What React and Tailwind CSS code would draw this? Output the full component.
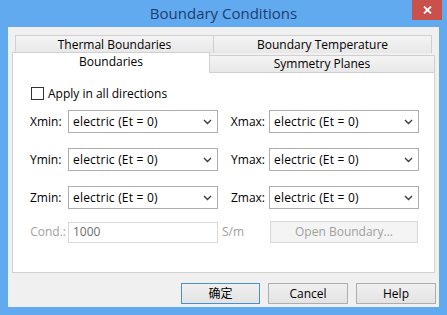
import React from 'react';

const font = { fontFamily: '"Open Sans", "Noto Sans CJK SC", sans-serif' };

const Chevron = () => (
  <svg width="9" height="6" viewBox="0 0 9 6" className="shrink-0">
    <path d="M1 1 L4.5 4.5 L8 1" fill="none" stroke="#3c3c3c" strokeWidth="1.4" />
  </svg>
);

const Combo = ({ value }) => (
  <div className="w-[150px] h-[23px] border border-[#acacac] bg-white flex items-center pl-[4px] pr-[5px] justify-between">
    <span className="text-[12px] text-black leading-none tracking-[0.2px]">{value}</span>
    <Chevron />
  </div>
);

const Row = ({ left, right }) => (
  <div className="flex items-center h-[23px]">
    <div className="w-[42px] pl-[4px] text-[12px] text-black">{left}</div>
    <Combo value="electric (Et = 0)" />
    <div className="w-[51px] pr-[4px] text-right text-[12px] text-black">{right}</div>
    <Combo value="electric (Et = 0)" />
  </div>
);

const Button = ({ children, primary }) => (
  <button
    className={`h-[21px] text-[12px] text-black border bg-gradient-to-b from-[#f0f0f0] to-[#e3e3e3] ${primary ? 'w-[79px] border-[#4a90d0]' : 'w-[80px] border-[#adadad]'}`}
  >
    {children}
  </button>
);

export default function App() {
  return (
    <div style={font} className="w-[447px] h-[315px] bg-[#62aaef] flex flex-col overflow-hidden">
      <div className="h-[27px] relative flex items-center justify-center shrink-0">
        <span className="text-[15px] text-[#1c3d6e] leading-none">Boundary Conditions</span>
        <div className="absolute left-[412px] top-0 w-[30px] h-[20px] bg-[#c9504b] flex items-center justify-center">
          <svg width="9" height="8" viewBox="0 0 9 8">
            <path d="M1 0.5 L8 7.5 M8 0.5 L1 7.5" stroke="#fff" strokeWidth="1.8" />
          </svg>
        </div>
      </div>

      <div className="mx-[8px] w-[431px] h-[280px] bg-[#f0f0f0] flex flex-col pt-[8px] px-[4px]">
        <div className="flex mx-[3px] h-[18px]">
          <div className="w-[199px] border border-b-0 border-[#d0d0d0] bg-gradient-to-b from-[#f4f4f4] to-[#e8e8e8] flex items-center justify-center text-[12px]">
            Thermal Boundaries
          </div>
          <div className="flex-1 border border-b-0 border-l-0 border-[#d0d0d0] bg-gradient-to-b from-[#f4f4f4] to-[#e8e8e8] flex items-center justify-center text-[12px]">
            Boundary Temperature
          </div>
        </div>
        <div className="flex h-[20px] -mt-[1px]">
          <div className="relative z-10 w-[198px] h-[21px] border border-b-0 border-[#d0d0d0] bg-white flex items-center justify-center text-[12px] pb-[3px]">
            Boundaries
          </div>
          <div className="flex-1 mt-[3px] h-[17px] border border-b-0 border-l-0 border-[#d0d0d0] bg-gradient-to-b from-[#f4f4f4] to-[#e8e8e8] flex items-center justify-center text-[12px]">
            Symmetry Planes
          </div>
        </div>
        <div className="h-[201px] border border-[#d0d0d0] bg-white flex flex-col pl-[13px]">
          <div className="flex items-center mt-[14px] ml-[5px] h-[13px]">
            <div className="w-[13px] h-[13px] border border-[#333] bg-white" />
            <span className="ml-[4px] text-[12px] text-black">Apply in all directions</span>
          </div>
          <div className="mt-[10px] flex flex-col gap-[15px]">
            <Row left="Xmin:" right="Xmax:" />
            <Row left="Ymin:" right="Ymax:" />
            <Row left="Zmin:" right="Zmax:" />
          </div>
          <div className="flex items-center mt-[12px] h-[22px]">
            <div className="w-[42px] pr-[2px] text-right text-[12px] text-[#a0a0a0]">Cond.:</div>
            <div className="w-[150px] h-[21px] border border-[#d9d9d9] bg-white flex items-center pl-[4px] text-[12px] text-[#6d6d6d]">
              1000
            </div>
            <span className="ml-[4px] w-[48px] text-[12px] text-[#a0a0a0]">S/m</span>
            <div className="w-[148px] h-[22px] border border-[#d9d9d9] bg-[#f4f4f4] flex items-center justify-center text-[12px] text-[#a0a0a0]">
              Open Boundary...
            </div>
          </div>
        </div>
        <div className="flex justify-end gap-[8px] mt-[10px] mr-[-1px]">
          <Button primary>确定</Button>
          <Button>Cancel</Button>
          <Button>Help</Button>
        </div>
      </div>
    </div>
  );
}
